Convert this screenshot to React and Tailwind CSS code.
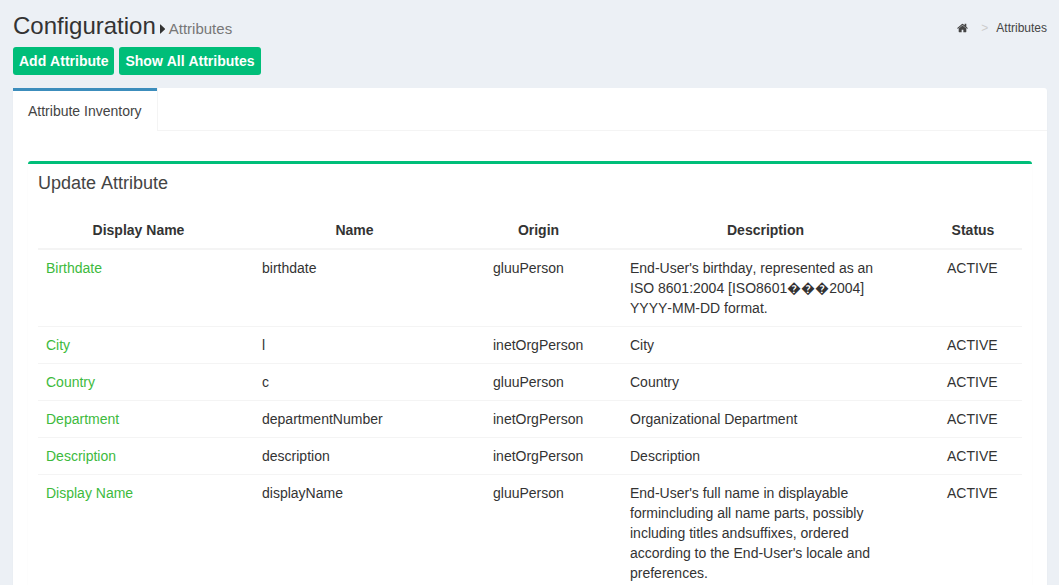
const attributes = [
  {
    label: "Birthdate",
    name: "birthdate",
    origin: "gluuPerson",
    description:
      "End-User's birthday, represented as an ISO 8601:2004 [ISO8601\uFFFD\uFFFD\uFFFD2004] YYYY-MM-DD format.",
    status: "ACTIVE",
  },
  { label: "City", name: "l", origin: "inetOrgPerson", description: "City", status: "ACTIVE" },
  { label: "Country", name: "c", origin: "gluuPerson", description: "Country", status: "ACTIVE" },
  {
    label: "Department",
    name: "departmentNumber",
    origin: "inetOrgPerson",
    description: "Organizational Department",
    status: "ACTIVE",
  },
  {
    label: "Description",
    name: "description",
    origin: "inetOrgPerson",
    description: "Description",
    status: "ACTIVE",
  },
  {
    label: "Display Name",
    name: "displayName",
    origin: "gluuPerson",
    description:
      "End-User's full name in displayable formincluding all name parts, possibly including titles andsuffixes, ordered according to the End-User's locale and preferences.",
    status: "ACTIVE",
  },
];

function HomeIcon() {
  return (
    <svg viewBox="0 0 1664 1792" className="h-3 w-[11px]" fill="currentColor" aria-hidden="true">
      <path d="M1408 992v480q0 26-19 45t-45 19H960v-384H704v384H320q-26 0-45-19t-19-45V992q0-1 .5-3t.5-3l575-474 575 474q1 2 1 6zm223-69l-62 74q-8 9-21 11h-3q-13 0-21-7L832 424 140 1001q-12 8-24 7-13-2-21-11l-62-74q-8-10-7-23.5T37 878l719-599q32-26 76-26t76 26l244 204V288q0-14 9-23t23-9h192q14 0 23 9t9 23v408l219 182q10 8 11 21.5t-7 23.5z" />
    </svg>
  );
}

function CaretIcon() {
  return (
    <svg viewBox="0 0 5 10" className="h-2.5 w-[5px]" fill="currentColor" aria-hidden="true">
      <path d="M0 .6Q0 0 .5 .4L4.8 4.6Q5.2 5 4.8 5.4L.5 9.6Q0 10 0 9.4z" />
    </svg>
  );
}

function ActionButton({ children }) {
  return (
    <button
      type="button"
      className="h-7 rounded-[3px] bg-[#00be79] px-1.5 text-sm font-bold text-white"
    >
      {children}
    </button>
  );
}

function AttributeTable() {
  const th = "border-b-2 border-[#f4f4f4] py-2 pl-2 text-center font-bold";
  const td = "border-b border-[#f4f4f4] p-2 align-top";
  return (
    <table className="w-full table-fixed border-separate border-spacing-0 text-sm leading-5">
      <colgroup>
        <col className="w-[216px]" />
        <col className="w-[231px]" />
        <col className="w-[137px]" />
        <col />
        <col className="w-[83px]" />
      </colgroup>
      <thead>
        <tr>
          <th scope="col" className={`${th} pr-[23px]`}>Display Name</th>
          <th scope="col" className={`${th} pr-[38px]`}>Name</th>
          <th scope="col" className={`${th} pr-[38px]`}>Origin</th>
          <th scope="col" className={`${th} pr-[38px]`}>Description</th>
          <th scope="col" className={`${th} pr-[23px]`}>Status</th>
        </tr>
      </thead>
      <tbody>
        {attributes.map((row) => (
          <tr key={row.name}>
            <td className={td}>
              <a href="#" className="text-[#3dba3d]">{row.label}</a>
            </td>
            <td className={td}>{row.name}</td>
            <td className={td}>{row.origin}</td>
            <td className={td}>
              <div className="max-w-[250px]">{row.description}</div>
            </td>
            <td className={td}>{row.status}</td>
          </tr>
        ))}
      </tbody>
    </table>
  );
}

export default function App() {
  return (
    <div className="min-h-screen bg-[#ecf0f5] pt-3 pr-3 pl-[13px] font-['Liberation_Sans',Arial,sans-serif] text-[#333] [font-kerning:none]">
      <header className="flex items-start justify-between">
        <h1 className="flex items-baseline text-2xl leading-7">
          Configuration
          <span className="ml-1 flex items-center gap-1 text-[15px] text-[#777]">
            <span className="text-[#333]">
              <CaretIcon />
            </span>
            Attributes
          </span>
        </h1>
        <nav aria-label="Breadcrumb" className="flex items-center pt-1.5 text-xs leading-5 text-[#444]">
          <a href="#" aria-label="Home">
            <HomeIcon />
          </a>
          <span className="pr-2 pl-[13px] text-[#ccc]">&gt;</span>
          <a href="#">Attributes</a>
        </nav>
      </header>

      <div className="mt-1 flex gap-[5px]">
        <ActionButton>Add Attribute</ActionButton>
        <ActionButton>Show All Attributes</ActionButton>
      </div>

      <main className="mt-[13px] rounded-[3px] bg-white shadow-[0_1px_1px_rgba(0,0,0,0.1)]">
        <div role="tablist" className="flex">
          <button
            type="button"
            role="tab"
            aria-selected="true"
            className="border-t-[3px] border-t-[#3c8dbc] px-[15px] py-2.5 text-sm leading-5 text-[#444]"
          >
            Attribute Inventory
          </button>
          <div className="flex-1 border-b border-l border-[#f4f4f4]" />
        </div>
        <div className="px-[15px] pt-[30px] pb-4">
          <section className="rounded-[3px] border-t-[3px] border-[#00be79] bg-white shadow-[0_1px_1px_rgba(0,0,0,0.1)]">
            <h2 className="p-2.5 text-lg leading-[18px] text-[#444]">Update Attribute</h2>
            <div className="p-2.5">
              <AttributeTable />
            </div>
          </section>
        </div>
      </main>
    </div>
  );
}
